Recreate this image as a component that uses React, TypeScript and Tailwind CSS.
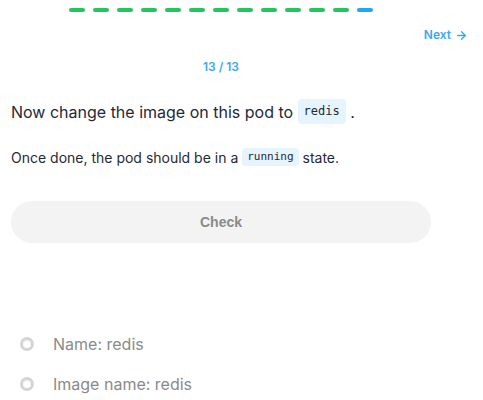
import React from "react";

const Code = ({ children, big }: { children: React.ReactNode; big?: boolean }) => (
  <code
    className={
      big
        ? "inline-block rounded-[4px] bg-[#e6f4fd] px-[6px] py-[3px] text-[12px] leading-[19px] text-[#1f2937] align-middle"
        : "inline-block rounded-[4px] bg-[#e6f4fd] px-[5px] py-[2px] text-[11px] leading-[14px] text-[#1f2937] align-middle"
    }
    style={{ fontFamily: '"DejaVu Sans Mono", "Liberation Mono", monospace' }}
  >
    {children}
  </code>
);

const Radio = ({ label }: { label: string }) => (
  <div className="flex items-center gap-[19px] pl-[20px]">
    <span className="h-[14px] w-[14px] rounded-full border-[3px] border-[#d4d4d4] bg-white shadow-[inset_0_1px_1px_rgba(0,0,0,0.08)]" />
    <span
      className="text-[16px] text-[#8a8a8a]"
      style={{ fontFamily: 'Inter, "Liberation Sans", sans-serif' }}
    >
      {label}
    </span>
  </div>
);

export default function App() {
  const dashes = Array.from({ length: 13 }, (_, i) => i);
  return (
    <div
      className="relative h-[400px] w-[483px] bg-white"
      style={{ fontFamily: 'Inter, "Liberation Sans", sans-serif' }}
    >
      <div className="flex w-[442px] justify-center gap-[8px] pt-[8px]">
        {dashes.map((i) => (
          <span
            key={i}
            className={
              i === 12
                ? "h-[4px] w-[16px] rounded-full bg-[#1fa8f2]"
                : "h-[4px] w-[16px] rounded-full bg-[#22c55e]"
            }
          />
        ))}
      </div>
      <div className="mt-[14px] flex justify-end pr-[15px]">
        <span className="flex items-center gap-[4px] text-[12px] font-semibold text-[#3aa8f2]">
          Next
          <svg width="13" height="13" viewBox="0 0 24 24" fill="none" stroke="currentColor" strokeWidth="2.5" strokeLinecap="round" strokeLinejoin="round">
            <path d="M5 12h14" />
            <path d="m12 5 7 7-7 7" />
          </svg>
        </span>
      </div>
      <div className="ml-[11px] w-[420px]">
        <div className="mt-[14px] text-center text-[12px] font-semibold text-[#3aa8f2]">13 / 13</div>
        <div className="mt-[23px] flex h-[25px] items-center text-[16px] text-[#1f2937] whitespace-pre">
          <span>Now change the image on this pod to </span>
          <Code big>redis</Code>
          <span> .</span>
        </div>
        <div className="mt-[23px] flex h-[20px] items-center text-[14px] text-[#1f2937] whitespace-pre">
          <span>Once done, the pod should be in a </span>
          <Code>running</Code>
          <span> state.</span>
        </div>
        <button
          className="mt-[34px] flex h-[42px] w-[420px] items-center justify-center rounded-full bg-[#f3f3f3] text-[14px] font-bold text-[#8a8a8a]"
          style={{ fontFamily: '"Liberation Sans", Arial, sans-serif' }}
        >
          Check
        </button>
      </div>
      <div className="mt-[89px] flex flex-col gap-[16px]">
        <Radio label="Name: redis" />
        <Radio label="Image name: redis" />
      </div>
    </div>
  );
}
